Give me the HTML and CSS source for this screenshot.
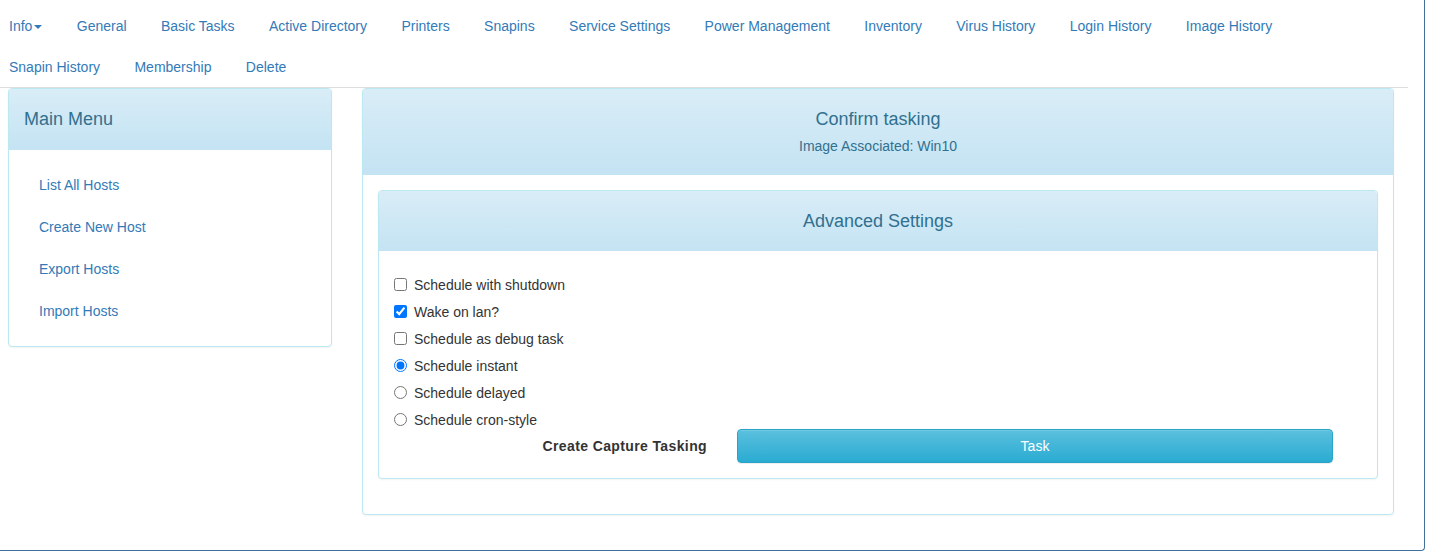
FILE: index.html
```html
<!DOCTYPE html>
<html>
<head>
<meta charset="utf-8">
<link rel="stylesheet" href="styles.css">
</head>
<body>
<div class="frame">
  <ul class="nav">
    <li><a href="#">Info<span class="caret"></span></a></li>
    <li><a href="#">General</a></li>
    <li><a href="#">Basic Tasks</a></li>
    <li><a href="#">Active Directory</a></li>
    <li><a href="#">Printers</a></li>
    <li><a href="#">Snapins</a></li>
    <li><a href="#">Service Settings</a></li>
    <li><a href="#">Power Management</a></li>
    <li><a href="#">Inventory</a></li>
    <li><a href="#">Virus History</a></li>
    <li><a href="#">Login History</a></li>
    <li><a href="#">Image History</a></li>
    <li><a href="#">Snapin History</a></li>
    <li><a href="#">Membership</a></li>
    <li><a href="#">Delete</a></li>
  </ul>
  <div class="divider"></div>
  <div class="content">
    <div class="panel side">
      <div class="panel-heading side-heading"><h3>Main Menu</h3></div>
      <div class="side-body">
        <a href="#">List All Hosts</a>
        <a href="#">Create New Host</a>
        <a href="#">Export Hosts</a>
        <a href="#">Import Hosts</a>
      </div>
    </div>
    <div class="panel main">
      <div class="panel-heading main-heading">
        <h3>Confirm tasking</h3>
        <p>Image Associated: Win10</p>
      </div>
      <div class="main-body">
        <div class="panel inner">
          <div class="panel-heading inner-heading"><h3>Advanced Settings</h3></div>
          <div class="inner-body">
            <label class="opt"><input type="checkbox">Schedule with shutdown</label>
            <label class="opt"><input type="checkbox" checked>Wake on lan?</label>
            <label class="opt"><input type="checkbox">Schedule as debug task</label>
            <label class="opt"><input type="radio" name="s" checked>Schedule instant</label>
            <label class="opt"><input type="radio" name="s">Schedule delayed</label>
            <label class="opt"><input type="radio" name="s">Schedule cron-style</label>
            <div class="action">
              <span class="action-label">Create Capture Tasking</span>
              <button class="btn-task">Task</button>
            </div>
          </div>
        </div>
      </div>
    </div>
  </div>
</div>
</body>
</html>
```

FILE: styles.css
```css
html, body {
  margin: 0;
  padding: 0;
  background: #fff;
}
body {
  font-family: "Liberation Sans", Arial, sans-serif;
  font-size: 14px;
  color: #333;
}
a {
  color: #337ab7;
  text-decoration: none;
}
.frame {
  width: 1424px;
  height: 550px;
  border-right: 1px solid #41709a;
  border-bottom: 1px solid #41709a;
  border-bottom-right-radius: 4px;
}
.nav {
  list-style: none;
  margin: 0;
  padding: 5px 0 0 9px;
  display: flex;
  flex-wrap: wrap;
  column-gap: 34.4px;
  width: 1370px;
  box-sizing: content-box;
}
.nav li a {
  display: block;
  line-height: 21px;
  padding: 11px 0 9px;
}
.caret {
  display: inline-block;
  width: 0;
  height: 0;
  margin-left: 2px;
  vertical-align: middle;
  border-top: 4px solid #337ab7;
  border-left: 4px solid transparent;
  border-right: 4px solid transparent;
}
.divider {
  width: 1408px;
  border-top: 1px solid #ddd;
}
.content {
  display: flex;
  align-items: flex-start;
  padding-left: 8px;
  column-gap: 30px;
}
.panel {
  border: 1px solid #bce8f1;
  border-radius: 4px;
  background: #fff;
  box-shadow: 0 1px 2px rgba(0,0,0,0.05);
}
.panel-heading {
  background: linear-gradient(to bottom, #d9edf7 0, #c4e3f3 100%);
  color: #31708f;
  border-top-left-radius: 3px;
  border-top-right-radius: 3px;
}
.panel-heading h3 {
  margin: 0;
  font-size: 18px;
  font-weight: normal;
  line-height: 22px;
}
.side {
  width: 322px;
}
.side-heading {
  height: 61px;
  box-sizing: border-box;
  display: flex;
  align-items: center;
  padding: 0 0 2px 15px;
}
.side-body {
  padding: 14px 15px;
  display: flex;
  flex-direction: column;
}
.side-body a {
  display: block;
  padding: 11px 15px;
  line-height: 20px;
}
.main {
  width: 1030px;
}
.main-heading {
  height: 86px;
  box-sizing: border-box;
  padding-top: 19px;
  text-align: center;
}
.main-heading p {
  margin: 6px 0 0;
  font-size: 14px;
  line-height: 20px;
}
.main-body {
  padding: 15px 15px 15px;
}
.inner {
  margin-bottom: 20px;
}
.inner-heading {
  height: 60px;
  display: flex;
  align-items: center;
  justify-content: center;
}
.inner-body {
  padding: 20px 15px 15px;
  display: flex;
  flex-direction: column;
}
.opt {
  display: flex;
  align-items: center;
  height: 27px;
  line-height: 20px;
}
.opt input {
  margin: 0 7px 0 0;
  width: 13px;
  height: 13px;
}
.action {
  display: flex;
  align-items: center;
  margin-top: -4px;
}
.action-label {
  width: 313px;
  text-align: right;
  font-weight: bold;
  letter-spacing: 0.38px;
}
.btn-task {
  margin-left: 30px;
  width: 596px;
  height: 34px;
  border: 1px solid #28a4c9;
  border-radius: 4px;
  background: linear-gradient(to bottom, #5bc0de 0, #2aabd2 100%);
  color: #fff;
  font-family: "Liberation Sans", Arial, sans-serif;
  font-size: 14px;
  box-shadow: inset 0 1px 0 rgba(255,255,255,0.15), 0 1px 1px rgba(0,0,0,0.075);
}
```
